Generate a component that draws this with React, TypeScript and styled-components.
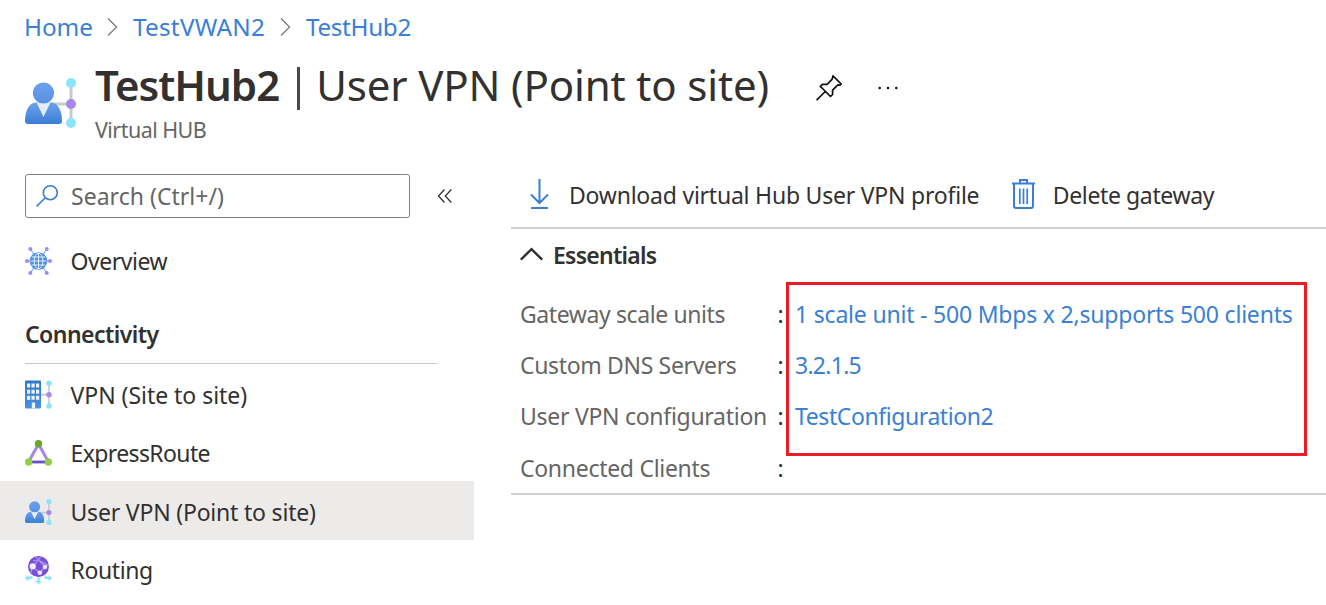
import React from "react";
import styled, { createGlobalStyle } from "styled-components";

const blue = "#3a7fd5";
const ink = "#323130";
const muted = "#666564";

const GlobalStyle = createGlobalStyle`
  * { box-sizing: border-box; }
  body {
    margin: 0;
    background: #fff;
    color: ${ink};
    font-family: "Noto Sans", "Open Sans", sans-serif;
    font-size: 23px;
    overflow: hidden;
  }
  svg { display: block; flex: none; overflow: visible; }
`;

const Page = styled.div`
  width: 1326px;
  height: 605px;
  overflow: hidden;
  white-space: nowrap;
`;

const Label = styled.span<{ $track?: number }>`
  letter-spacing: ${(p) => p.$track ?? 0}px;
`;

const Breadcrumbs = styled.nav`
  display: flex;
  align-items: center;
  height: 54px;
  padding-left: 24px;
`;

const Crumb = styled.a<{ $track: number; $width: number }>`
  width: ${(p) => p.$width}px;
  color: ${blue};
  font-size: 24.3px;
  line-height: 34px;
  letter-spacing: ${(p) => p.$track}px;
`;

const CrumbSeparator = styled.svg`
  margin: 0 15px 0 14px;
`;

const Header = styled.header`
  display: flex;
  align-items: flex-start;
  height: 106px;
  padding-left: 25px;
`;

const HubIcon = styled.div`
  width: 70px;
  padding-top: 23.5px;
`;

const Heading = styled.div`
  width: 721px;
`;

const Title = styled.h1`
  margin: 0;
  height: 61px;
  font-size: 42px;
  line-height: 62px;
  font-weight: 400;
  letter-spacing: -0.15px;
`;

const ResourceName = styled.strong`
  font-weight: 600;
  letter-spacing: -1px;
`;

const TitleDivider = styled.span`
  display: inline-block;
  width: 3px;
  height: 43px;
  margin: 0 16px 0 18px;
  vertical-align: -9px;
  background: #4a4948;
`;

const Subtitle = styled.div`
  color: ${muted};
  font-size: 21.5px;
  line-height: 30px;
  letter-spacing: -0.55px;
`;

const TitleActions = styled.div`
  display: flex;
  align-items: center;
  gap: 36px;
  height: 68px;
`;

const Columns = styled.div`
  display: flex;
  align-items: flex-start;
`;

const Sidebar = styled.aside`
  width: 474px;
  padding-top: 14px;
`;

const SearchRow = styled.div`
  display: flex;
  align-items: center;
  gap: 28px;
  padding-left: 25px;
`;

const SearchBox = styled.div`
  display: flex;
  align-items: center;
  gap: 13px;
  width: 385px;
  height: 44px;
  padding: 0 0 1px 10px;
  border: 1px solid #838281;
  border-radius: 3px;
  color: ${muted};
`;

const NavItem = styled.div<{ $selected?: boolean }>`
  display: flex;
  align-items: center;
  height: 58.6px;
  padding: 2.6px 0 0 25px;
  background: ${(p) => (p.$selected ? "#edebe9" : "transparent")};
`;

const NavIcon = styled.span`
  width: 45.5px;
`;

const OverviewRow = styled(NavItem)`
  margin-top: 14.4px;
  padding-top: 0;
  padding-bottom: 1.6px;
`;

const SectionTitle = styled.h2`
  width: 412px;
  height: 60px;
  margin: 13px 0 0 25px;
  border-bottom: 1px solid #c8c6c4;
  font-size: 23px;
  font-weight: 600;
  line-height: 61px;
  letter-spacing: -0.55px;
`;

const Main = styled.main`
  position: relative;
  width: 815px;
  margin-left: 37px;
`;

const Toolbar = styled.div`
  display: flex;
  align-items: center;
  height: 69px;
  padding-left: 19px;
  border-bottom: 2px solid #d2d0d0;
`;

const ToolButton = styled.div<{ $gap: number }>`
  display: flex;
  align-items: center;
  gap: ${(p) => p.$gap}px;
  height: 67px;
  margin-right: 32.5px;
  padding-top: 1px;
`;

const ToolLabel = styled(Label)`
  padding-top: 2px;
`;

const EssentialsHeader = styled.div`
  display: flex;
  align-items: center;
  gap: 10px;
  height: 59px;
  padding: 0 0 7.5px 9px;
  font-weight: 600;
`;

const Properties = styled.dl`
  display: grid;
  grid-template-columns: 257.5px 17.5px 1fr;
  grid-auto-rows: 51.3px;
  align-items: center;
  height: 207px;
  margin: 0;
  padding-left: 9px;
  border-bottom: 2px solid #d2d0d0;
`;

const PropertyName = styled.dt`
  color: ${muted};
`;

const Colon = styled.span``;

const PropertyValue = styled.dd`
  margin: 0;
  color: ${blue};
`;

const Highlight = styled.div`
  position: absolute;
  top: 122px;
  left: 275px;
  width: 521px;
  height: 174px;
  border: 3px solid #ed1c24;
`;

function Separator() {
  return (
    <CrumbSeparator width="11" height="19" viewBox="0 0 11 19" fill="none" stroke="#777" strokeWidth="1.2">
      <path d="M1 .5l8.600 8.500L1 17.500" />
    </CrumbSeparator>
  );
}

function UserHub({ id, width, height }: { id: string; width: number; height: number }) {
  return (
    <svg width={width} height={height} viewBox="0 0 52 50">
      <defs>
        <linearGradient id={`${id}h`} x1="0" y1="0" x2="0" y2="1">
          <stop offset="0" stopColor="#6f9fee" />
          <stop offset="1" stopColor="#5792e3" />
        </linearGradient>
        <linearGradient id={`${id}b`} x1="0" y1="0" x2="0" y2="1">
          <stop offset="0" stopColor="#6f9fee" />
          <stop offset="1" stopColor="#3a7fd3" />
        </linearGradient>
      </defs>
      <path d="M46 5v40M25 26h21" stroke="#cacaca" strokeWidth="3" />
      <path d="M0 43C0 33 4 24.5 11 24.5h15C33 24.5 37 33 37 43c0 2-1 3-3 3H3c-2 0-3-1-3-3z" fill={`url(#${id}b)`} />
      <path d="M11.5 24.5h14L18.5 39z" fill="#e3edfb" />
      <circle cx="18.5" cy="15" r="10.6" fill={`url(#${id}h)`} />
      <circle cx="46" cy="5" r="5" fill="#8be4ff" />
      <circle cx="46" cy="26" r="5" fill="#a687ef" />
      <circle cx="46" cy="45" r="5" fill="#8be4ff" />
    </svg>
  );
}

function GlobeIcon() {
  return (
    <svg width="27" height="28" viewBox="0 0 27 28">
      <path d="M5.3 2l16.4 24M21.7 2L5.3 26M2 14h23" stroke="#83b3f4" strokeWidth="1.3" />
      <circle cx="13.5" cy="14" r="8.8" fill="#4d90e2" />
      <g fill="none" stroke="#e3effc" strokeWidth="1">
        <ellipse cx="13.5" cy="14" rx="4.4" ry="7.800" />
        <path d="M13.5 6v16M5.5 14h16M6.8 10h13.4M6.8 18h13.4" />
      </g>
      <g fill="#a687ef">
        <circle cx="5.3" cy="2" r="2" />
        <circle cx="21.8" cy="2" r="2" />
        <circle cx="2" cy="14" r="2" />
        <circle cx="25" cy="14" r="2" />
        <circle cx="5.3" cy="26" r="2" />
        <circle cx="21.8" cy="26" r="2" />
      </g>
    </svg>
  );
}

function BuildingIcon() {
  return (
    <svg width="27" height="29" viewBox="0 0 27 29">
      <defs>
        <linearGradient id="building" x1="0" y1="0" x2="0" y2="1">
          <stop offset="0" stopColor="#2f77c9" />
          <stop offset="1" stopColor="#4d90e2" />
        </linearGradient>
      </defs>
      <path d="M24 3v23M15 14.6h9" stroke="#cacaca" strokeWidth="1.6" />
      <rect y="0.5" width="16" height="28" rx="1" fill="url(#building)" />
      <g fill="#e9f2fd">
        {[3.5, 9.7, 15.8].map((y) =>
          [2, 6.5, 11].map((x) => <rect key={`${x}-${y}`} x={x} y={y} width="3.2" height="4" />)
        )}
        <rect x="6.8" y="22.5" width="3.3" height="6" />
      </g>
      <circle cx="24" cy="3.2" r="2.8" fill="#8be4ff" />
      <circle cx="24" cy="14.7" r="2.7" fill="#a687ef" />
      <circle cx="24" cy="26" r="2.8" fill="#8be4ff" />
    </svg>
  );
}

function ExpressRouteIcon() {
  return (
    <svg width="27" height="26" viewBox="0 0 27 26">
      <path d="M13.5 4L3.5 22M13.5 4l10 18" stroke="#a687ef" strokeWidth="3" />
      <path d="M3.5 22h20" stroke="#6b4bd0" strokeWidth="2.8" />
      <circle cx="13.5" cy="3.8" r="3.7" fill="#68a52b" />
      <circle cx="3.7" cy="22" r="3.7" fill="#93cf45" />
      <circle cx="23.3" cy="22" r="3.7" fill="#93cf45" />
    </svg>
  );
}

function RoutingIcon() {
  return (
    <svg width="27" height="28" viewBox="0 0 27 28">
      <defs>
        <clipPath id="ball"><circle cx="13.5" cy="10.5" r="10.5" /></clipPath>
      </defs>
      <circle cx="13.5" cy="10.5" r="10.5" fill="#7550d6" />
      <g clipPath="url(#ball)" fill="none" stroke="#ad8df3" strokeWidth="1.4">
        <path d="M8 11L17 -1M8 11l7 6M15 17l5-6M8 5C13 3 18 6 24 10M20 11L11 1M7 11L5 22" />
      </g>
      <circle cx="7.7" cy="10.3" r="3.1" fill="#f1edfc" />
      <circle cx="20" cy="11" r="2.3" fill="#e9e2fb" />
      <circle cx="14.8" cy="16.8" r="2.3" fill="#e9e2fb" />
      <g fill="#8be4ff">
        <path d="M13.5 28.300l-3.500-3.300h2.300v-3.500h2.400v3.500h2.300zM0 22l3.400-3.300v2.200c1.600 0 2-.5 2.700-1.200l2 1.500c-.9 1.400-2.400 2-4.700 2v2.200zM27 22l-3.400-3.300v2.200c-1.600 0-2-.5-2.700-1.200l-2 1.500c.9 1.400 2.400 2 4.700 2v2.200z" />
      </g>
    </svg>
  );
}

const navItems = [
  { text: "VPN (Site to site)", track: -0.03, icon: <BuildingIcon /> },
  { text: "ExpressRoute", track: -0.62, icon: <ExpressRouteIcon /> },
  { text: "User VPN (Point to site)", track: -0.195, icon: <UserHub id="nav" width={27} height={26} />, selected: true },
  { text: "Routing", track: -0.4, icon: <RoutingIcon /> },
];

const properties = [
  { name: "Gateway scale units", track: -0.4, value: "1 scale unit - 500 Mbps x 2,supports 500 clients", valueTrack: -0.2 },
  { name: "Custom DNS Servers", track: -0.34, value: "3.2.1.5", valueTrack: -0.73 },
  { name: "User VPN configuration", track: -0.28, value: "TestConfiguration2", valueTrack: -0.417 },
  { name: "Connected Clients", track: -0.29, value: "", valueTrack: 0 },
];

export default function App() {
  return (
    <Page>
      <GlobalStyle />
      <Breadcrumbs>
        <Crumb $track={-0.05} $width={69}>Home</Crumb>
        <Separator />
        <Crumb $track={0.24} $width={133}>TestVWAN2</Crumb>
        <Separator />
        <Crumb $track={-0.35} $width={106}>TestHub2</Crumb>
      </Breadcrumbs>

      <Header>
        <HubIcon><UserHub id="head" width={52} height={50} /></HubIcon>
        <Heading>
          <Title>
            <ResourceName>TestHub2</ResourceName>
            <TitleDivider />
            User VPN (Point to site)
          </Title>
          <Subtitle>Virtual HUB</Subtitle>
        </Heading>
        <TitleActions>
          <svg width="26" height="26" viewBox="0 0 26 26" fill="none" stroke="#111" strokeWidth="1.7" strokeLinejoin="round">
            <path d="M17 .8L25.200 9l-1.300 1.100-2-.2-5.300 5.300v4.300L14.500 21.500 4.300 11.300l2-2h4.800L16.200 4.100z M9.300 16.500L.6 25.200" />
          </svg>
          <svg width="20" height="4" viewBox="0 0 20 4" fill="#111">
            <circle cx="1.700" cy="2" r="1.300" />
            <circle cx="10" cy="2" r="1.300" />
            <circle cx="18.300" cy="2" r="1.300" />
          </svg>
        </TitleActions>
      </Header>

      <Columns>
        <Sidebar>
          <SearchRow>
            <SearchBox>
              <svg width="22" height="22" viewBox="0 0 22 22" fill="none" stroke={blue} strokeWidth="1.600">
                <circle cx="14.300" cy="7.700" r="7" />
                <path d="M9.300 12.700L.6 21.400" />
              </svg>
              <Label $track={0.03}>Search (Ctrl+/)</Label>
            </SearchBox>
            <svg width="14" height="14" viewBox="0 0 14 14" fill="none" stroke={ink} strokeWidth="1.300">
              <path d="M6.500 .5L.5 7l6 6.500M13.300 .5L7.300 7l6 6.500" />
            </svg>
          </SearchRow>
          <OverviewRow>
            <NavIcon><GlobeIcon /></NavIcon>
            <Label $track={-0.45}>Overview</Label>
          </OverviewRow>
          <SectionTitle>Connectivity</SectionTitle>
          {navItems.map((item) => (
            <NavItem key={item.text} $selected={item.selected}>
              <NavIcon>{item.icon}</NavIcon>
              <Label $track={item.track}>{item.text}</Label>
            </NavItem>
          ))}
        </Sidebar>

        <Main>
          <Toolbar>
            <ToolButton $gap={20}>
              <svg width="19" height="30" viewBox="0 0 19 30" fill="none" stroke={blue} strokeWidth="2">
                <path d="M9.500 0v24M1 15.500l8.500 8.500 8.500-8.500M1 29h17" />
              </svg>
              <ToolLabel $track={-0.222}>Download virtual Hub User VPN profile</ToolLabel>
            </ToolButton>
            <ToolButton $gap={18}>
              <svg width="23" height="30" viewBox="0 0 23 30" fill="none" stroke={blue} strokeWidth="2">
                <path d="M0 4.500h23M8 4V1h7v3M2 5v21.500Q2 29 4 29h15q2 0 2-2.500V5" />
                <path d="M7.800 9.500v15.500M11.500 9.500v15.500M15.200 9.500v15.500" strokeWidth="1.700" />
              </svg>
              <ToolLabel $track={-0.38}>Delete gateway</ToolLabel>
            </ToolButton>
          </Toolbar>
          <EssentialsHeader>
            <svg width="23" height="13" viewBox="0 0 23 13" fill="none" stroke={ink} strokeWidth="2.400">
              <path d="M.8 11.700L11.500 1.200l10.700 10.500" />
            </svg>
            <Label $track={-0.75}>Essentials</Label>
          </EssentialsHeader>
          <Properties>
            {properties.map((p) => (
              <React.Fragment key={p.name}>
                <PropertyName><Label $track={p.track}>{p.name}</Label></PropertyName>
                <Colon>:</Colon>
                <PropertyValue><Label $track={p.valueTrack}>{p.value}</Label></PropertyValue>
              </React.Fragment>
            ))}
          </Properties>
          <Highlight />
        </Main>
      </Columns>
    </Page>
  );
}
